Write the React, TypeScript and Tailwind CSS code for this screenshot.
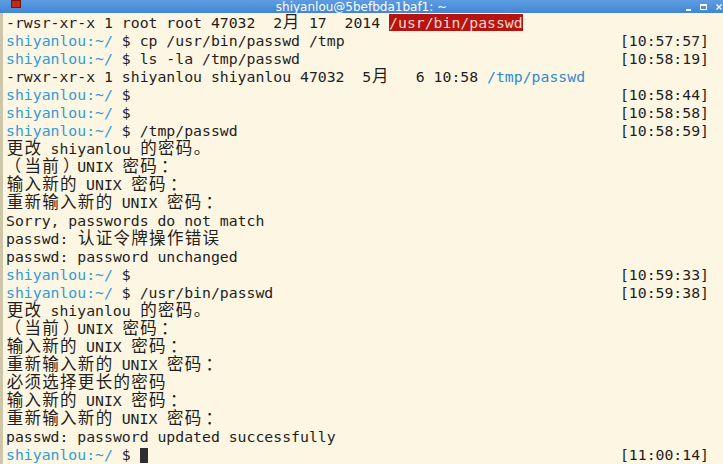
type Seg = { t: string; c?: "p" | "b" | "r" };
type Line = { segs: Seg[]; ts?: string; cursor?: boolean };

const prompt = (cmd = ""): Seg[] => [
  { t: "shiyanlou", c: "p" },
  { t: ":~/", c: "p" },
  { t: " $ " + cmd },
];

const lines: Line[] = [
  { segs: [{ t: "-rwsr-xr-x 1 root root 47032  2月 17  2014 " }, { t: "/usr/bin/passwd", c: "r" }] },
  { segs: prompt("cp /usr/bin/passwd /tmp"), ts: "[10:57:57]" },
  { segs: prompt("ls -la /tmp/passwd"), ts: "[10:58:19]" },
  { segs: [{ t: "-rwxr-xr-x 1 shiyanlou shiyanlou 47032  5月   6 10:58 " }, { t: "/tmp/passwd", c: "b" }] },
  { segs: prompt(), ts: "[10:58:44]" },
  { segs: prompt(), ts: "[10:58:58]" },
  { segs: prompt("/tmp/passwd"), ts: "[10:58:59]" },
  { segs: [{ t: "更改 shiyanlou 的密码。" }] },
  { segs: [{ t: "（当前）UNIX 密码：" }] },
  { segs: [{ t: "输入新的 UNIX 密码：" }] },
  { segs: [{ t: "重新输入新的 UNIX 密码：" }] },
  { segs: [{ t: "Sorry, passwords do not match" }] },
  { segs: [{ t: "passwd: 认证令牌操作错误" }] },
  { segs: [{ t: "passwd: password unchanged" }] },
  { segs: prompt(), ts: "[10:59:33]" },
  { segs: prompt("/usr/bin/passwd"), ts: "[10:59:38]" },
  { segs: [{ t: "更改 shiyanlou 的密码。" }] },
  { segs: [{ t: "（当前）UNIX 密码：" }] },
  { segs: [{ t: "输入新的 UNIX 密码：" }] },
  { segs: [{ t: "重新输入新的 UNIX 密码：" }] },
  { segs: [{ t: "必须选择更长的密码" }] },
  { segs: [{ t: "输入新的 UNIX 密码：" }] },
  { segs: [{ t: "重新输入新的 UNIX 密码：" }] },
  { segs: [{ t: "passwd: password updated successfully" }] },
  { segs: prompt(), ts: "[11:00:14]", cursor: true },
];

const isWide = (ch: string) => /[\u2e80-\u9fff\u3000-\u303f\uff00-\uffef]/.test(ch);

// fullwidth punctuation sits a bit more to the middle of its two cells here
const punct: Record<string, string> = {
  "（": "ml-[-2px] mr-[2px]",
  "）": "pl-[3px] tracking-[-3px]",
  "：": "pl-[3px] tracking-[-3px]",
};

// terminal cells: CJK glyphs take two columns
function Cells({ text }: { text: string }) {
  const out: React.ReactNode[] = [];
  let run = "";
  Array.from(text).forEach((ch, i) => {
    if (isWide(ch)) {
      if (run) out.push(run);
      run = "";
      out.push(
        <span
          key={i}
          className={"inline-block w-[17.8px] text-center text-[16.5px] leading-none " + (punct[ch] ?? "")}
        >
          {ch}
        </span>
      );
    } else {
      run += ch;
    }
  });
  if (run) out.push(run);
  return <>{out}</>;
}

const segClass = {
  p: "text-[#2f9cd6]",
  b: "text-[#2f8ad0]",
  r: "bg-[#b7140f] text-[#f3d6cc]",
};

const App = () => {
  return (
    <div className="w-[723px] h-[464px] overflow-hidden flex flex-col bg-[#fdf6e3]">
      <div className="h-[13px] shrink-0 relative flex items-center justify-center bg-gradient-to-b from-[#5c9de2] to-[#4385d3]">
        <div className="absolute left-[11px] top-0 w-[10px] h-[8px] bg-[#c42a1c] border border-[#7a1410]" />
        <p className="font-['DejaVu_Sans',sans-serif] text-[12px] leading-[12px] text-white">
          shiyanlou@5befbda1baf1: ~
        </p>
        <div className="absolute right-[1px] top-0 h-[13px] flex items-center gap-[9px]">
          <div className="w-[5px] h-[2px] mt-[6px] bg-white" />
          <div className="w-[7px] h-[6px] border border-white border-t-2" />
          <svg width="6" height="6" viewBox="0 0 6 6" className="text-white">
            <path d="M0.5 0.5 L5.5 5.5 M5.5 0.5 L0.5 5.5" stroke="currentColor" strokeWidth="1.4" />
          </svg>
        </div>
      </div>
      <div className="flex-1 flex border-l-[3px] border-[#cdc6a8]">
        <div className="flex-1 pt-[1px] pl-[3px] pr-[14px] font-['DejaVu_Sans_Mono','Noto_Sans_CJK_SC',monospace] text-[14.8px] text-[#1e1e1e]">
          {lines.map((line, i) => (
            <div key={i} className="flex justify-between h-[18px] leading-[18px] whitespace-pre">
              <span>
                {line.segs.map((s, j) => (
                  <span key={j} className={s.c ? segClass[s.c] : ""}>
                    <Cells text={s.t} />
                  </span>
                ))}
                {line.cursor && (
                  <span className="inline-block w-[8px] h-[15px] align-[-3px] bg-[#2e2e2e]" />
                )}
              </span>
              {line.ts && <span>{line.ts}</span>}
            </div>
          ))}
        </div>
      </div>
    </div>
  );
};

export default App;
